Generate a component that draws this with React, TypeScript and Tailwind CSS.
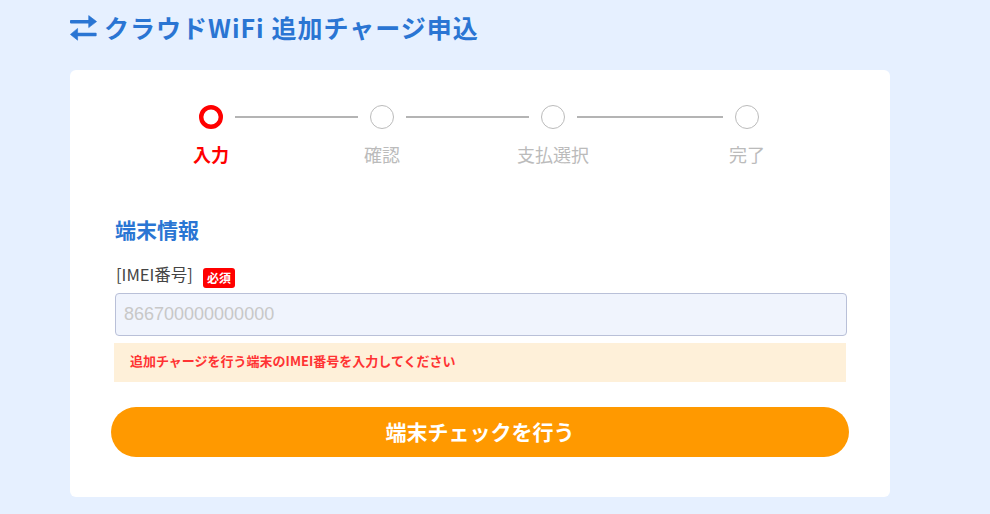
const font = "font-['Noto_Sans_CJK_JP','Noto_Sans',sans-serif]";

const steps = [
  { label: '入力', active: true, line: 'w-[123px]' },
  { label: '確認', active: false, line: 'w-[123px]' },
  { label: '支払選択', active: false, line: 'w-[146px]' },
  { label: '完了', active: false, line: '' },
];

function SwapIcon() {
  return (
    <svg viewBox="0 0 27 26" className="w-[27px] h-[26px] shrink-0" fill="currentColor">
      <rect x="0" y="5" width="20" height="3.4" rx="0.8" />
      <path d="M18.7 0.6 L26.6 6.6 L18.7 12.6 Z" stroke="currentColor" strokeWidth="0.6" strokeLinejoin="round" />
      <rect x="7" y="17.8" width="19.6" height="3.4" rx="0.8" />
      <path d="M7.6 13.4 L0.4 19.4 L7.6 25.2 Z" stroke="currentColor" strokeWidth="0.6" strokeLinejoin="round" />
    </svg>
  );
}

function Stepper() {
  return (
    <div className="flex pl-[129px]">
      {steps.map((s) => (
        <div key={s.label} className="flex">
          <div className="flex flex-col items-center w-6">
            {s.active ? (
              <svg viewBox="0 0 24 24" className="w-6 h-6 shrink-0">
                <circle cx="12" cy="12" r="9.8" fill="none" stroke="#ff0000" strokeWidth="4.4" />
              </svg>
            ) : (
              <div className="w-6 h-6 shrink-0 rounded-full border border-[#bbbbbb]" />
            )}
            <p
              className={
                s.active
                  ? 'mt-[13px] text-[18px] leading-[24px] whitespace-nowrap font-bold text-[#ff0000]'
                  : 'mt-[13px] text-[18px] leading-[24px] whitespace-nowrap text-[#bbbbbb]'
              }
            >
              {s.label}
            </p>
          </div>
          {s.line && <div className={`h-[2px] mt-[11px] mx-3 bg-[#b4b4b4] ${s.line}`} />}
        </div>
      ))}
    </div>
  );
}

export default function App() {
  return (
    <div className={`min-h-[514px] bg-[#e6f0ff] ${font}`}>
      <div className="w-[820px] ml-[70px] pb-[17px]">
        <h1 className="h-[70px] pb-[15px] flex items-center gap-[7px] text-[25px] font-bold tracking-[1px] text-[#2a75d3]">
          <SwapIcon />
          <span>クラウドWiFi 追加チャージ申込</span>
        </h1>

        <div className="bg-white rounded-md h-[427px] pt-[35px]">
          <Stepper />

          <div className="pl-[41px] pr-[41px] mt-[48px]">
            <h2 className="pl-[4px] text-[21px] leading-[30px] font-bold text-[#2a75d3]">端末情報</h2>

            <div className="pl-[5px] mt-[24px] flex items-start h-[20px] text-[16.5px] text-[#444444]">
              <span className="leading-5 -mt-[4px]">[IMEI番号]</span>
              <span className="ml-[10px] w-8 h-5 rounded-[3px] bg-[#ff0000] text-white text-[12px] leading-5 font-bold text-center">
                必須
              </span>
            </div>

            <input
              readOnly
              placeholder="866700000000000"
              className="block mt-[5px] ml-[4px] w-[732px] h-[43px] pl-[8px] pr-2 rounded-[4px] border border-[#b9c0d8] bg-[#f0f4fd] text-[18px] font-['Liberation_Sans',sans-serif] placeholder:text-[#c8c8c8]"
            />

            <div className="mt-[7px] ml-[3px] w-[732px] h-[39px] pl-4 pb-[4px] flex items-center bg-[#fef0d9] text-[13px] font-bold text-[#ff3333]">
              追加チャージを行う端末のIMEI番号を入力してください
            </div>

            <button className="block mt-[25px] w-[738px] h-[50px] rounded-[25px] bg-[#ff9900] text-white text-[21px] font-bold">
              端末チェックを行う
            </button>
          </div>
        </div>
      </div>
    </div>
  );
}
